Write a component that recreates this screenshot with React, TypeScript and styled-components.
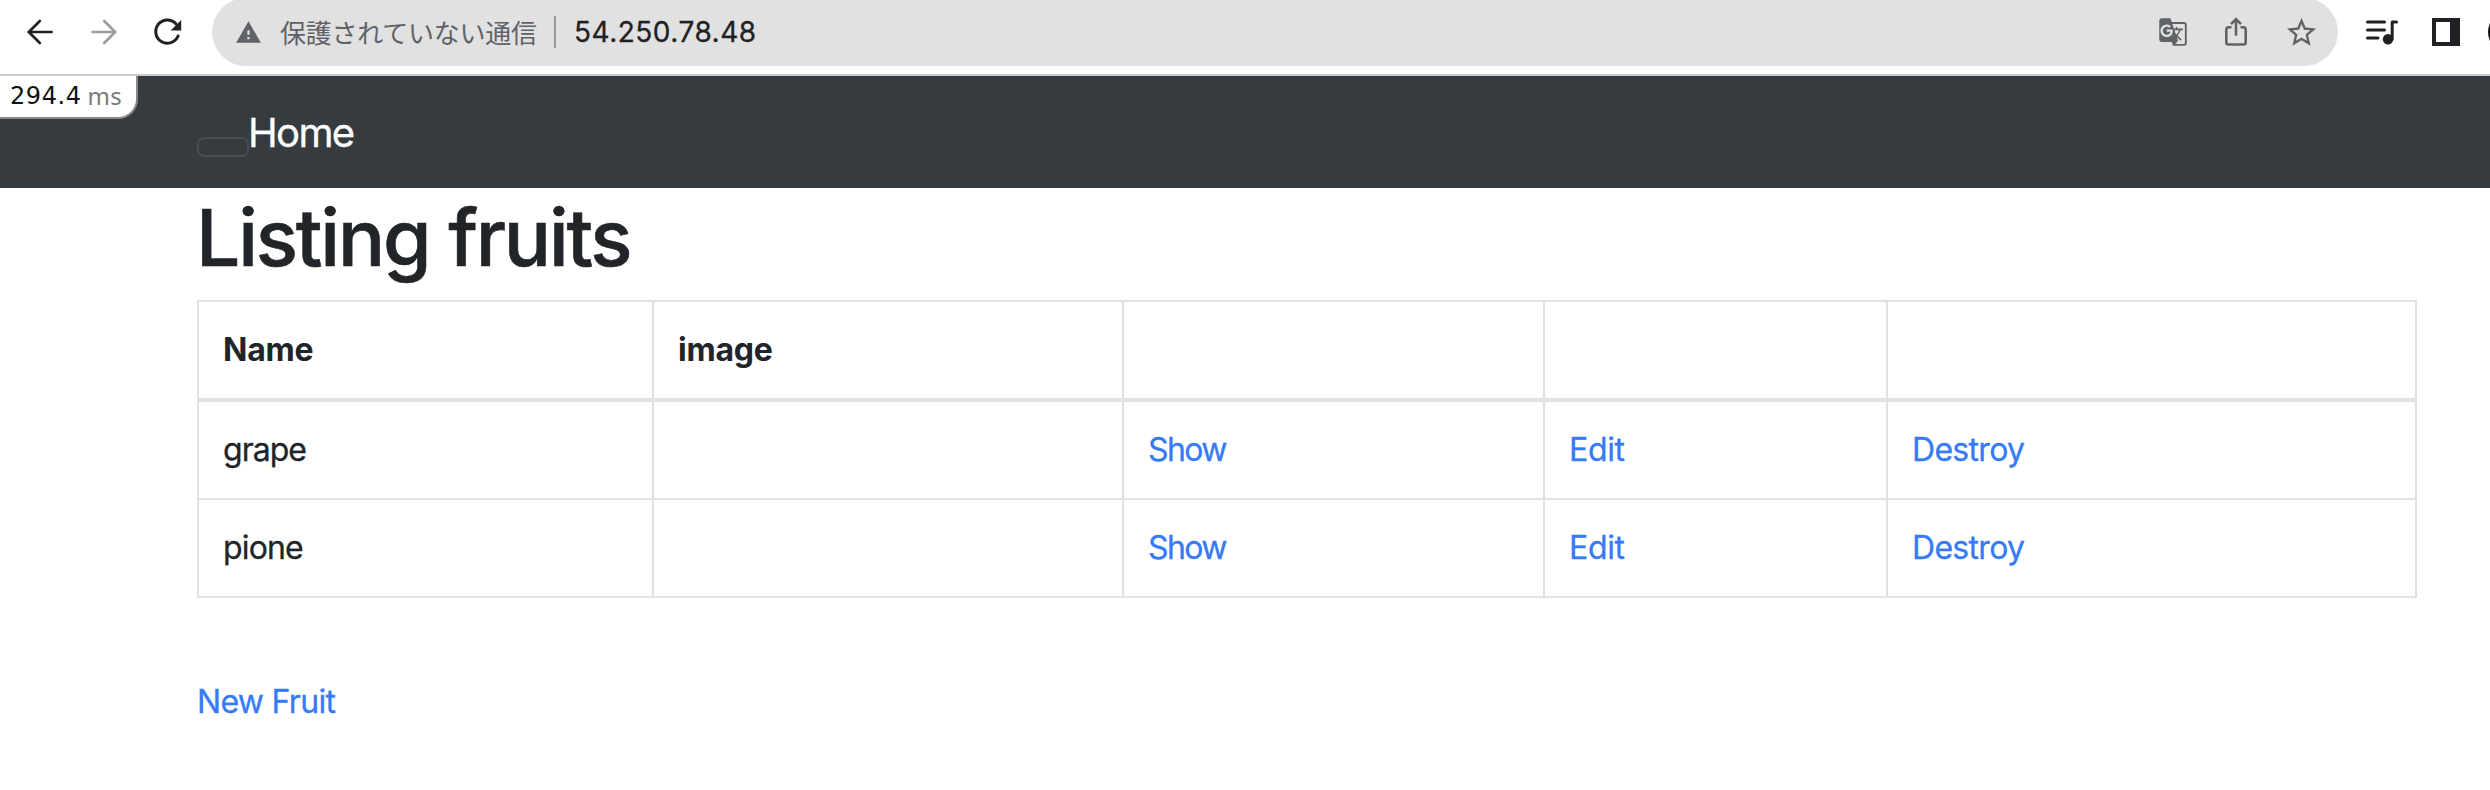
import React from 'react';
import styled, { createGlobalStyle } from 'styled-components';
import { MdGTranslate, MdStarOutline, MdWarning } from 'react-icons/md';

const GlobalStyle = createGlobalStyle`
  * { box-sizing: border-box; }
  body {
    margin: 0;
    background: #fff;
    color: #212529;
    font: 400 32px/48px Inter, "Liberation Sans", sans-serif;
    overflow: hidden;
  }
`;

const Page = styled.div`
  height: 790px;
  overflow: hidden;
`;

const Toolbar = styled.div`
  display: flex;
  align-items: flex-start;
  height: 76px;
  padding-left: 25px;
  border-bottom: 2px solid #cbcdcd;
  overflow: hidden;
`;

const ToolButton = styled.span<{ $gap?: number; $color?: string }>`
  display: flex;
  flex: none;
  align-items: center;
  height: 63px;
  margin-left: ${(p) => p.$gap ?? 0}px;
  color: ${(p) => p.$color ?? '#202124'};
  svg { display: block; }
`;

const AddressBar = styled.div`
  display: flex;
  flex: none;
  align-items: center;
  width: 2126px;
  height: 68px;
  margin: -2px 0 0 29px;
  padding-left: 23px;
  border-radius: 34px;
  background: #e1e1e1;
  color: #5f6368;
  white-space: nowrap;
`;

const Security = styled.span`
  width: 260px;
  margin-left: 18px;
  font: 400 26px/40px "Noto Sans CJK JP", sans-serif;
  letter-spacing: -0.25px;
`;

const Divider = styled.span`
  width: 2px;
  height: 32px;
  margin-left: 14px;
  background: #969799;
`;

const Address = styled.span`
  flex: 1;
  margin-left: 18px;
  color: #202124;
  font-size: 28px;
  letter-spacing: 0.5px;
  -webkit-text-stroke: 0.3px currentColor;
`;

const BarActions = styled.span`
  display: flex;
  align-items: center;
  gap: 36px;
  margin-right: 19px;
  color: #5f6368;
  svg { display: block; }
`;

const Avatar = styled.span`
  flex: none;
  width: 42px;
  height: 42px;
  border-radius: 50%;
  background: #111;
`;

const Navbar = styled.nav`
  position: relative;
  display: flex;
  align-items: center;
  height: 112px;
  padding-left: 197px;
  background: #363b3f;
`;

const Toggler = styled.button`
  width: 52px;
  height: 20px;
  margin: 30px 0 0;
  padding: 0;
  align-self: center;
  border: 2px solid #494c51;
  border-radius: 7px;
  background: transparent;
`;

const Brand = styled.a`
  margin: 2px 0 0 -1px;
  color: #fff;
  font-size: 40px;
  line-height: 60px;
  letter-spacing: -1.65px;
  -webkit-text-stroke: 0.3px currentColor;
`;

const Timing = styled.div`
  position: absolute;
  top: 0;
  left: 0;
  display: flex;
  width: 138px;
  height: 43px;
  padding-left: 10px;
  border: solid #888;
  border-width: 0 2px 2px 0;
  border-bottom-right-radius: 20px;
  background: #fff;
  color: #111;
  font: 400 24px/41px "DejaVu Sans", sans-serif;
  letter-spacing: 0.55px;
`;

const Unit = styled.span`
  margin-left: 6px;
  color: #7b7b7b;
  font-family: "Noto Sans", sans-serif;
  line-height: 39px;
  letter-spacing: 0.3px;
`;

const Container = styled.main`
  width: 2220px;
  margin-left: 197px;
`;

const Title = styled.h1`
  margin: 0 0 14px -1px;
  padding-top: 2px;
  font-size: 78.5px;
  font-weight: 500;
  line-height: 96px;
  letter-spacing: -2.2px;
  -webkit-text-stroke: 0.6px currentColor;
`;

const Table = styled.table`
  width: 2220px;
  table-layout: fixed;
  border-collapse: separate;
  border-spacing: 0;
  border: solid #dee2e6;
  border-width: 2px 0 0 2px;
`;

const Col = styled.col<{ $width: number }>`
  width: ${(p) => p.$width}px;
`;

const Head = styled.th`
  height: 100px;
  padding: 24px;
  border: solid #dee2e6;
  border-width: 0 2px 4px 0;
  font-weight: 700;
  text-align: left;
  letter-spacing: -0.2px;
`;

const Cell = styled.td<{ $track?: number }>`
  height: 98px;
  padding: 24px;
  border: solid #dee2e6;
  border-width: 0 2px 2px 0;
  letter-spacing: ${(p) => p.$track ?? -0.9}px;
  -webkit-text-stroke: 0.3px currentColor;
`;

const Link = styled.a`
  color: #367af6;
  -webkit-text-stroke: 0.3px currentColor;
`;

const Footer = styled.div`
  margin-top: 80px;
  letter-spacing: -0.7px;
`;

const ArrowIcon = ({ flip = false }: { flip?: boolean }) => (
  <svg width="30" height="30" viewBox="0 0 30 30" fill="none" stroke="currentColor" strokeWidth="2.7" strokeLinecap="round">
    <path d={flip ? 'M3.4 15H26M15.2 4 26.2 15 15.2 26' : 'M26.6 15H4M14.8 4 3.8 15 14.8 26'} />
  </svg>
);

const ReloadIcon = () => (
  <svg width="30" height="30" viewBox="0 0 30 30" fill="none">
    <path d="M23.2 7.1A11.6 11.6 0 1 0 25.1 19" stroke="currentColor" strokeWidth="3" strokeLinecap="round" />
    <path d="M28.2 3V13.6H17.6Z" fill="currentColor" />
  </svg>
);

const ShareIcon = () => (
  <svg width="24" height="30" viewBox="0 0 24 30" fill="none" stroke="currentColor" strokeWidth="2.6">
    <path d="M7.5 10.3H4.5Q2.3 10.3 2.3 12.5V25.3Q2.3 27.5 4.5 27.5H19.5Q21.7 27.5 21.7 25.3V12.5Q21.7 10.3 19.5 10.3H16.5" />
    <path d="M12 18.8V2.5M7 7.2 12 2.2 17 7.2" />
  </svg>
);

const QueueIcon = () => (
  <svg width="34" height="30" viewBox="0 0 34 30" fill="none" stroke="currentColor" strokeWidth="3" strokeLinecap="round">
    <path d="M2.5 5H19.5M2.5 13H19.5M2.5 21H13" />
    <path d="M31.5 5H27.2V22" strokeLinejoin="round" />
    <circle cx="23" cy="22.2" r="5.2" fill="currentColor" stroke="none" />
  </svg>
);

const SidePanelIcon = () => (
  <svg width="28" height="28" viewBox="0 0 28 28">
    <path fill="currentColor" fillRule="evenodd" d="M0 0H28V28H0ZM4 4V24H18V4Z" />
  </svg>
);

const fruits = [
  { name: 'grape', track: -1 },
  { name: 'pione', track: -0.85 },
];

export default function App() {
  return (
    <Page>
      <GlobalStyle />
      <Toolbar>
        <ToolButton><ArrowIcon /></ToolButton>
        <ToolButton $gap={34} $color="#9b9c9e"><ArrowIcon flip /></ToolButton>
        <ToolButton $gap={34}><ReloadIcon /></ToolButton>
        <AddressBar>
          <MdWarning size={27} />
          <Security>保護されていない通信</Security>
          <Divider />
          <Address>54.250.78.48</Address>
          <BarActions>
            <MdGTranslate size={30} />
            <ShareIcon />
            <MdStarOutline size={35} />
          </BarActions>
        </AddressBar>
        <ToolButton $gap={27}><QueueIcon /></ToolButton>
        <ToolButton $gap={33}><SidePanelIcon /></ToolButton>
        <ToolButton $gap={28}><Avatar /></ToolButton>
      </Toolbar>
      <Navbar>
        <Timing>294.4<Unit>ms</Unit></Timing>
        <Toggler aria-label="Toggle navigation" />
        <Brand>Home</Brand>
      </Navbar>
      <Container>
        <Title>Listing fruits</Title>
        <Table>
          <colgroup>
            <Col $width={455} />
            <Col $width={470} />
            <Col $width={421} />
            <Col $width={343} />
            <Col $width={529} />
          </colgroup>
          <thead>
            <tr>
              <Head>Name</Head>
              <Head>image</Head>
              <Head />
              <Head />
              <Head />
            </tr>
          </thead>
          <tbody>
            {fruits.map((f) => (
              <tr key={f.name}>
                <Cell $track={f.track}>{f.name}</Cell>
                <Cell />
                <Cell $track={-1.6}><Link>Show</Link></Cell>
                <Cell $track={-0.35}><Link>Edit</Link></Cell>
                <Cell $track={-0.7}><Link>Destroy</Link></Cell>
              </tr>
            ))}
          </tbody>
        </Table>
        <Footer><Link>New Fruit</Link></Footer>
      </Container>
    </Page>
  );
}
